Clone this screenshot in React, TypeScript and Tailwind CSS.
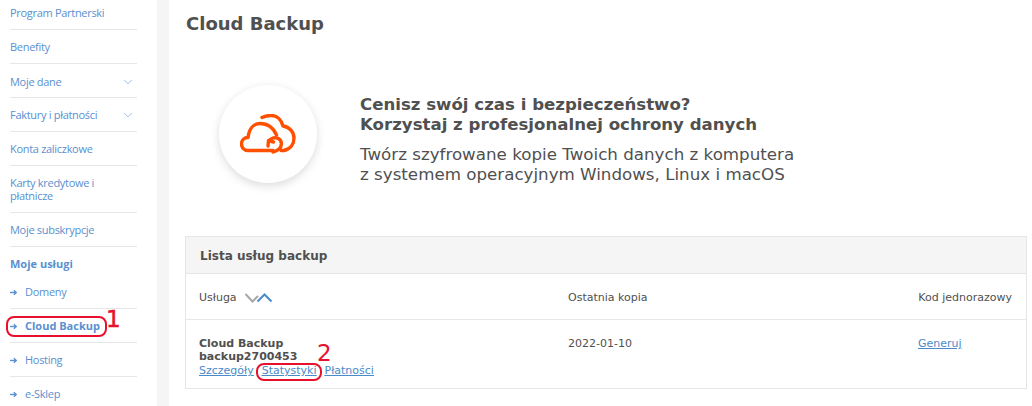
import { ChevronDown } from 'lucide-react'

const topLinks = [
  { label: 'Benefity', cls: 'pt-[1px]' },
  { label: 'Moje dane', arrow: true, cls: 'pt-[3px]' },
  { label: 'Faktury i płatności', arrow: true, cls: 'pt-[1px]' },
  { label: 'Konta zaliczkowe', cls: 'pt-[1px]' },
]

function RowArrow() {
  return (
    <svg width="7" height="7" viewBox="0 0 7 7" fill="none" stroke="currentColor" strokeWidth="1.4" className="shrink-0">
      <path d="M0 3.5 H6" />
      <path d="M3.8 1.2 L6.2 3.5 L3.8 5.8" />
    </svg>
  )
}

function SortArrows() {
  return (
    <svg width="27" height="10" viewBox="0 0 27 10" fill="none" strokeWidth="2">
      <path d="M0.5 1 L7.5 8.5 L13 3" stroke="#a8a8a8" />
      <path d="M12.5 8.5 L19.5 1.5 L26.5 8.5" stroke="#4a8ac9" />
    </svg>
  )
}

function CloudIcon() {
  return (
    <svg width="56" height="40" viewBox="0 0 56 40" fill="none" stroke="#ff5000" strokeWidth="3.4" strokeLinecap="round" strokeLinejoin="round">
      <path d="M33 36.5 H8 C3.5 36.5 1.5 33 1.5 30 C1.5 26.5 4 23.5 8 23.5 C9 15 13.5 9.5 20 9.5 C27 9.5 33 13 36.5 21" />
      <path d="M22 3.5 C25 2 28 1.5 31 1.5 C37 1.5 41.5 6 43 12 C49.5 13 54 18 54 24 C54 30 50.5 35 44 36.5 H41" />
      <path d="M29 27 C31 23.5 35.5 23 38.5 24.5 C42 26.5 42.5 32 39 35 C37.5 36.5 35.5 37.5 33 38" />
      <path d="M28 32 L28.5 26.5 L33.5 28" />
    </svg>
  )
}

export default function App() {
  return (
    <div className="relative flex h-[406px] w-[1032px] overflow-hidden bg-white font-['Open_Sans',sans-serif]">
      {/* Sidebar */}
      <aside className="flex w-[157px] shrink-0 flex-col pl-[10px] pr-[20px] text-[11px] tracking-[-0.3px] text-[#5a8fd0]">
        <a className="h-[30px] shrink-0 border-b border-[#e6e6e6] leading-[26px]">Program Partnerski</a>
        {topLinks.map(l => (
          <a key={l.label} className={`flex h-[34px] shrink-0 items-center justify-between border-b border-[#e6e6e6] pr-[2px] ${l.cls}`}>
            {l.label}
            {l.arrow && <ChevronDown className="h-[14px] w-[14px]" strokeWidth={1} />}
          </a>
        ))}
        <a className="flex h-[47px] shrink-0 items-center border-b border-[#e6e6e6] leading-[13px]">
          Karty kredytowe i<br />płatnicze
        </a>
        <a className="flex h-[34px] shrink-0 items-center border-b border-[#e6e6e6] pt-[1px]">Moje subskrypcje</a>
        <div className="flex h-[34px] shrink-0 items-center font-bold tracking-normal">Moje usługi</div>
        <a className="flex h-[28px] shrink-0 items-center gap-[8px] border-b border-[#e6e6e6] pb-[5px]">
          <RowArrow />
          Domeny
        </a>
        <a className="flex h-[34px] shrink-0 items-center gap-[8px] border-b border-[#e6e6e6] pt-[1px] font-bold tracking-normal">
          <RowArrow />
          Cloud Backup
        </a>
        <a className="flex h-[34px] shrink-0 items-center gap-[8px] border-b border-[#e6e6e6] pt-[1px]">
          <RowArrow />
          Hosting
        </a>
        <a className="flex h-[34px] shrink-0 items-center gap-[8px] border-b border-[#e6e6e6] pt-[1px]">
          <RowArrow />
          e-Sklep
        </a>
      </aside>
      <div className="w-[12px] shrink-0 bg-[#f5f5f5]" />

      {/* Main */}
      <main className="flex-1 px-[16px] font-['DejaVu_Sans',sans-serif] text-[#505050]">
        <h1 className="mt-[12px] pl-[1px] text-[18px] font-bold leading-[24px]">Cloud Backup</h1>

        <section className="mt-[48px] flex h-[100px] items-center pl-[34px]">
          <div className="flex h-[98px] w-[98px] shrink-0 items-center justify-center rounded-full bg-white shadow-[0_3px_10px_rgba(0,0,0,0.14)]">
            <CloudIcon />
          </div>
          <div className="ml-[43px] pt-[11px]">
            <p className="text-[16.6px] font-bold leading-[20px]">
              Cenisz swój czas i bezpieczeństwo?<br />Korzystaj z profesjonalnej ochrony danych
            </p>
            <p className="mt-[9px] text-[16.7px] leading-[20px]">
              Twórz szyfrowane kopie Twoich danych z komputera<br />z systemem operacyjnym Windows, Linux i macOS
            </p>
          </div>
        </section>

        <section className="mt-[52px] h-[153px] w-[842px] border border-[#e6e6e6] text-[11px]">
          <div className="flex h-[37px] items-center border-b border-[#e6e6e6] bg-[#f5f5f5] px-[14px] pt-[2px] text-[12px] font-bold">
            Lista usług backup
          </div>
          <div className="grid h-[46px] grid-cols-[369px_1fr_auto] items-center border-b border-[#e6e6e6] pl-[13px] pr-[14px] pt-[3px]">
            <div className="flex items-center gap-[8px]">
              Usługa <SortArrows />
            </div>
            <div>Ostatnia kopia</div>
            <div>Kod jednorazowy</div>
          </div>
          <div className="grid grid-cols-[369px_1fr_95px] px-[13px] pt-[17px]">
            <div className="leading-[13px]">
              <div className="font-bold">Cloud Backup<br />backup2700453</div>
              <div className="mt-[1px] flex gap-[8px] text-[#4a8ac9] underline">
                <a>Szczegóły</a>
                <a>Statystyki</a>
                <a>Płatności</a>
              </div>
            </div>
            <div className="leading-[13px]">2022-01-10</div>
            <a className="leading-[13px] text-[#4a8ac9] underline">Generuj</a>
          </div>
        </section>
      </main>

      {/* Annotations */}
      <div className="absolute left-[6px] top-[316px] h-[21px] w-[101px] rounded-[8px] border-2 border-[#e8112d]" />
      <div className="absolute left-[106px] top-[305px] font-['DejaVu_Sans',sans-serif] text-[23px] leading-[28px] text-[#e8112d] [-webkit-text-stroke:0.5px_#e8112d]">1</div>
      <div className="absolute left-[256px] top-[363px] h-[18px] w-[66px] rounded-[8px] border-2 border-[#e8112d]" />
      <div className="absolute left-[317px] top-[339px] font-['DejaVu_Sans',sans-serif] text-[23px] leading-[28px] text-[#e8112d]">2</div>
    </div>
  )
}
